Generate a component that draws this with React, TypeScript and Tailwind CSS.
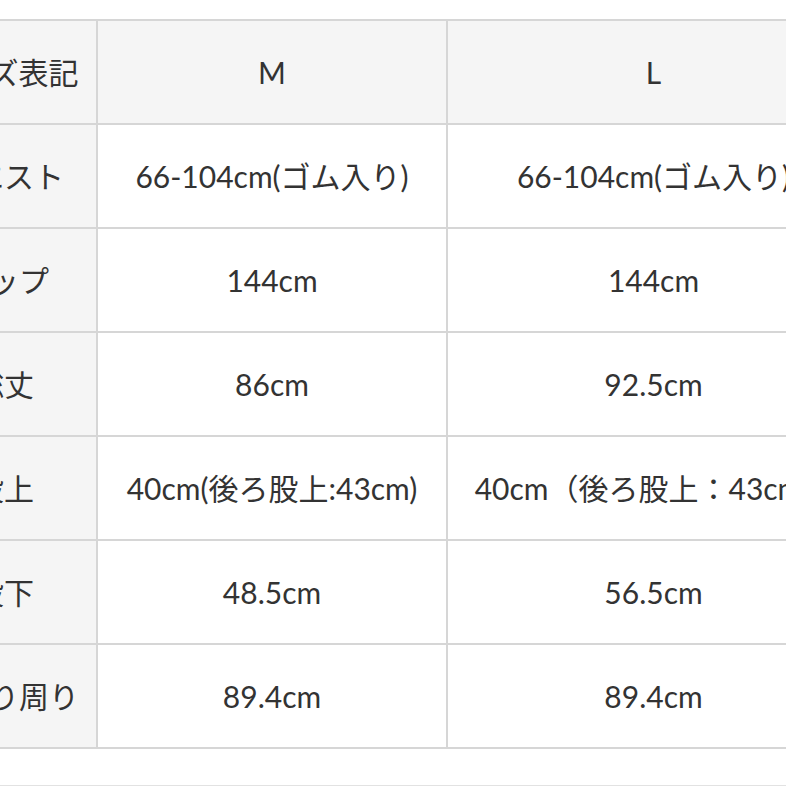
const rows: [string, string, string][] = [
  ['ウエスト', '66-104cm(ゴム入り)', '66-104cm(ゴム入り)'],
  ['ヒップ', '144cm', '144cm'],
  ['総丈', '86cm', '92.5cm'],
  ['股上', '40cm(後ろ股上:43cm)', '40cm（後ろ股上：43cm）'],
  ['股下', '48.5cm', '56.5cm'],
  ['わたり周り', '89.4cm', '89.4cm'],
];

const cell = 'h-[104px] border-2 border-[#d6d6d6] text-center whitespace-nowrap p-0';

export default function App() {
  return (
    <div
      className="w-[786px] h-[786px] overflow-hidden bg-white text-[#333333] text-[30px]"
      style={{ fontFamily: 'Lato, "Noto Sans CJK JP", sans-serif' }}
    >
      <div className="pt-[19px]">
        <table className="ml-[-90px] table-fixed border-collapse w-[949px]">
          <colgroup>
            <col className="w-[186px]" />
            <col className="w-[350px]" />
            <col className="w-[413px]" />
          </colgroup>
          <thead>
            <tr className="bg-[#f5f5f5]">
              <th className={`${cell} font-normal`}>サイズ表記</th>
              <th className={`${cell} font-normal`}>M</th>
              <th className={`${cell} font-normal`}>L</th>
            </tr>
          </thead>
          <tbody>
            {rows.map(([label, m, l]) => (
              <tr key={label}>
                <td className={`${cell} bg-[#f5f5f5]`}>{label}</td>
                <td className={`${cell} bg-white`}>{m}</td>
                <td className={`${cell} bg-white`}>{l}</td>
              </tr>
            ))}
          </tbody>
        </table>
        <div className="mt-[36px] border-t border-[#e2e2e2]" />
      </div>
    </div>
  );
}
